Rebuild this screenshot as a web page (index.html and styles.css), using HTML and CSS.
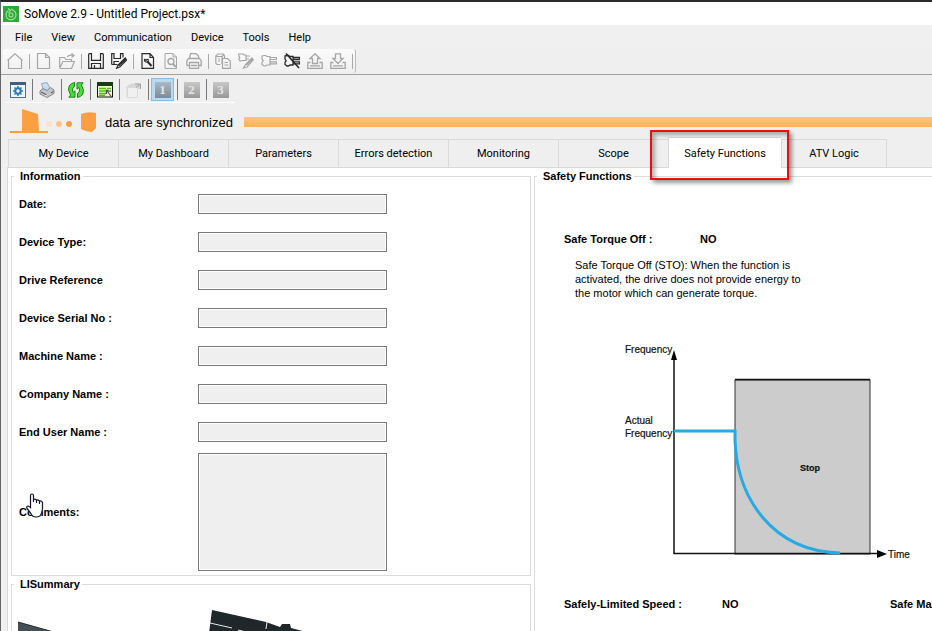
FILE: index.html
```html
<!DOCTYPE html>
<html lang="en">
<head>
    <meta charset="UTF-8">
    <meta name="viewport" content="width=device-width, initial-scale=1.0">
    <title>SoMove 2.9 - Untitled Project.psx*</title>
    <link rel="stylesheet" href="styles.css">
</head>
<body>
    <header class="titlebar">
        <svg width="16" height="16" viewBox="0 0 16 16">
            <rect width="16" height="16" fill="#2ea836"/>
            <path d="M5.5 4.5 A5 5 0 1 0 10.5 4.5 M5 2.5 L7.5 4.5 L5.5 7 M8 3 L10.5 4.5 M6 9 a2 2 0 1 0 4 0 a2 2 0 0 0 -4 0" fill="none" stroke="#a5e0a0" stroke-width="1.1"/>
        </svg>
        <h1>SoMove 2.9 - Untitled Project.psx*</h1>
    </header>

    <nav class="menubar">
        <button type="button">File</button>
        <button type="button">View</button>
        <button type="button">Communication</button>
        <button type="button">Device</button>
        <button type="button">Tools</button>
        <button type="button">Help</button>
    </nav>

    <!-- Project toolbar -->
    <div class="toolbar-row">
        <div class="toolbar main-toolbar">
            <button type="button" aria-label="Home"><svg class="off" viewBox="0 0 16 16"><path d="M0.5 7.5 L8 0.8 L15.5 7.5 M1.5 7 V15.5 H14.5 V7" stroke-width="1.2"/></svg></button>
            <span class="sep"></span>
            <button type="button" aria-label="New"><svg class="off" viewBox="0 0 16 16"><path d="M1.5 0.5 H9.5 L13.5 4.5 V15.5 H1.5 Z M9.5 0.5 V4.5 H13.5" stroke-width="1.2"/></svg></button>
            <button type="button" aria-label="Open"><svg class="off" viewBox="0 0 16 16"><path d="M0.7 15 V4.5 H5.5 L7 6.5 H12.5 V8.5 M0.7 15 L4 8.5 H15.5 L12.5 15.5 H0.7 M8 4 Q10 1.5 14.5 2.5 M12.5 0.5 L15 2.5 L12.5 4.5" stroke-width="1.2"/></svg></button>
            <span class="sep"></span>
            <button type="button" aria-label="Save"><svg viewBox="0 0 16 16"><path d="M0.7 0.7 V15.3 H15.3 V0.7 M0.7 0.7 H3.5 V7.3 H12.5 V0.7 H15.3 M3.5 15 V10.5 H12.5 V15 M6.5 12 V15" stroke-width="1.2"/></svg></button>
            <button type="button" aria-label="Save as"><svg viewBox="0 0 16 16"><path d="M0.7 11.5 V0.7 H3 V5.5 H9.5 V0.7 H12 V4.5 M0.7 11.5 H6.5 M3 11 V8.5 H8" stroke-width="1.2"/><path d="M14.2 4.8 L7 12 L5.5 15.3 L8.8 14 L15.6 7 Z M7.5 13 L14.8 6" stroke-width="1.1"/></svg></button>
            <span class="sep"></span>
            <button type="button" aria-label="Configure"><svg viewBox="0 0 16 16"><path d="M2 0.7 H10 L13.5 4.5 V15.3 H2 Z M10 1 V4.5 H13.5" stroke-width="1.2"/><path d="M7.5 8.5 L11.5 13" stroke-width="2"/><path d="M4.5 6 L6 7.5 L7.5 6 M4.5 6 Q4 9 6.5 9.3 Q9 8.5 8 6" stroke-width="1.1"/></svg></button>
            <button type="button" aria-label="Preview"><svg class="off" viewBox="0 0 16 16"><path d="M2 0.5 H10 L13.5 4 V15.5 H2 Z M10 0.5 V4 H13.5"/><circle cx="8" cy="8.5" r="3" stroke-width="1.4"/><path d="M10 11 L13 14" stroke-width="2"/></svg></button>
            <button type="button" aria-label="Print"><svg class="off" viewBox="0 0 16 16"><path d="M3.5 5.5 L4.5 0.6 H10 L12.5 3 V5.5 M0.8 12.5 V8 L2.5 5.5 H13.5 L15.2 8 V12.5 H12.5 M0.8 12.5 H3.5 M3.5 9.5 H12.5 V15.3 H3.5 Z M5 12.5 H11" stroke-width="1.3"/></svg></button>
            <span class="sep"></span>
            <button type="button" aria-label="Compare"><svg class="off" viewBox="0 0 16 16"><path d="M5.5 11.5 H2 L0.8 10 V3 L3 1 H8.5 L9.5 3 V5 M1 3.5 H7 V11 M7 3.5 L9 1.5 M3 6 H5 M3 8 H5 M7.5 5.5 H12.5 L15.3 8 V15.3 H7.5 Z M9.5 9.5 H13 M9.5 12 H13.5" stroke-width="1.2"/></svg></button>
            <button type="button" aria-label="Edit connection"><svg class="off" viewBox="0 0 16 16"><path d="M0.8 1 H5 L6 2 H8 V7.5 H4 L2 8 L0.8 6 L1.8 4.5 L0.8 3 Z M8 3 H12 M8 6 H11 M14 5 L7.5 11.5 L5.5 15 L9 14 L15.3 7 Z M8.5 12 L14.5 6" stroke-width="1.2"/></svg></button>
            <button type="button" aria-label="Connect"><svg class="off" viewBox="0 0 16 16"><path d="M1 3 L3 2.5 H4.5 L6 3.5 H9 V12 H6 L4.5 13 H3 L1 11.5 V9.5 L2.2 7.7 L1 6 Z M9 4.5 H15.5 V6.5 H9 M9 8.8 H15.5 V10.8 H9" stroke-width="1.2"/></svg></button>
            <button type="button" aria-label="Disconnect"><svg viewBox="0 0 16 16"><path d="M1 3 L3 2.5 H4.5 L6 3.5 H9 V12 H6 L4.5 13 H3 L1 11.5 V9.5 L2.2 7.7 L1 6 Z M9 4.5 H15.5 V6.5 H9 M9 8.8 H15.5 V10.8 H9" stroke-width="1.3"/><path d="M2 0.5 L15 15" stroke-width="1.6"/></svg></button>
            <button type="button" aria-label="Load from device"><svg class="off" viewBox="0 0 16 16"><path d="M8 0.8 L13 5.5 H10.5 V10.5 H5.5 V5.5 H3 Z M3.5 9.5 H0.8 V15.3 H15.2 V9.5 H12.5 M3 12.8 H13" stroke-width="1.3"/></svg></button>
            <button type="button" aria-label="Store to device"><svg class="off" viewBox="0 0 16 16"><path d="M5.5 0.8 H10.5 V5.5 H13 L8 10.5 L3 5.5 H5.5 Z M3.5 9.5 H0.8 V15.3 H15.2 V9.5 H12.5 M3 12.8 H13" stroke-width="1.3"/></svg></button>
            <span class="sep"></span>
        </div>
    </div>

    <!-- Device toolbar -->
    <div class="toolbar device-toolbar">
        <button type="button" aria-label="Settings"><svg viewBox="0 0 16 16"><rect x="0.5" y="0.5" width="15" height="15" fill="#eef5fa" stroke="#52708c"/><rect width="16" height="3" fill="#3f5f80" stroke="none"/><circle cx="8" cy="9" r="2.7" stroke="#2f7cb4" stroke-width="2"/><path d="M8 4 V6 M8 12 V14 M3 9 H5 M11 9 H13 M4.5 5.5 L6 7 M10 11 L11.5 12.5 M11.5 5.5 L10 7 M6 11 L4.5 12.5" stroke="#2f7cb4" stroke-width="1.5"/></svg></button>
        <span class="sep"></span>
        <button type="button" aria-label="Print report"><svg viewBox="0 0 16 16"><path d="M4 7 L2.5 1.5 L8 0.5 L11 6 L9 9 Z" fill="#c3def5" stroke="#93a9bd"/><path d="M1 9 L4 6.5 L8 8.5 L11.5 5.5 L15 8 V11.5 L8 15.5 L1 12 Z" fill="#c3c5c8" stroke="#84878b"/><path d="M2 10 L8 13 L14.5 9.5" stroke="#4d5054"/><path d="M6 14 L12 11" stroke="#f2f2f2"/></svg></button>
        <span class="sep"></span>
        <button type="button" aria-label="Refresh"><svg viewBox="0 0 16 16"><path d="M6.5 0.5 V4.5 Q4 5.5 4.5 9 L5 10.5 L7 8.8 V15.2 H0.8 L2.6 13 Q-0.8 8 1.2 4 Q3 1 6.5 0.5 Z M9.5 15.5 V11.5 Q12 10.5 11.5 7 L11 5.5 L9 7.2 V0.8 H15.2 L13.4 3 Q16.8 8 14.8 12 Q13 15 9.5 15.5 Z" fill="#4fdc3a" stroke="#148a14"/></svg></button>
        <span class="sep"></span>
        <button type="button" aria-label="Parameter list"><svg viewBox="0 0 16 16"><rect x="0.5" y="0.5" width="15" height="14.5" fill="#e6ffc8" stroke="#111"/><rect width="16" height="4" fill="#173d12" stroke="none"/><path d="M2 6.5 H9 M2 9 H9 M2 11.5 H9 M2 13.5 H8 M10 6.5 H14 M13 9 H14" stroke="#55b51b" stroke-width="1.4"/><path d="M9.5 8 L14.5 15 M9.5 7.5 V12 M9.5 8 L13.5 9.5" stroke="#555" stroke-width="1.2"/></svg></button>
        <span class="sep"></span>
        <button type="button" aria-label="Copy page"><svg viewBox="0 0 16 16"><path d="M0.5 5 Q3 1.5 8 1.5 H15 V7 H12 V15.5 H0.5 Z" fill="#d6d6d6" stroke="none"/><path d="M1.5 5.5 H11.5 V15.5 H1.5 Z" fill="#f0f0f0" stroke="#dadada"/><path d="M9 2 H14.5 V7 M10 5.5 L14 2.5" stroke="#a2a2a2"/></svg></button>
        <span class="sep"></span>
        <button type="button" class="page-btn selected"><span>1</span></button>
        <span class="sep"></span>
        <button type="button" class="page-btn"><span>2</span></button>
        <span class="sep"></span>
        <button type="button" class="page-btn"><span>3</span></button>
    </div>

    <div class="status">
        <svg width="90" height="28" viewBox="0 0 90 28">
            <path d="M12 1 L28 6 L29 23 H38 V25 H0 V23 H12 Z" fill="#fd9f40"/>
            <circle cx="39" cy="16" r="3" fill="#fee3cb"/>
            <circle cx="49" cy="16" r="3" fill="#fdc58d"/>
            <circle cx="59" cy="16" r="3" fill="#fd9f40"/>
            <path d="M71 6 Q78 3 86 5 V20 L82 24 Q76 24 71 21 Z" fill="#fd9f40"/>
        </svg>
        <span class="status-text">data are synchronized</span>
        <div class="status-bar"></div>
    </div>

    <nav class="tabs">
        <button type="button">My Device</button>
        <button type="button">My Dashboard</button>
        <button type="button">Parameters</button>
        <button type="button">Errors detection</button>
        <button type="button">Monitoring</button>
        <button type="button">Scope</button>
        <button type="button" class="active">Safety Functions</button>
        <button type="button" class="last">ATV Logic</button>
    </nav>

    <main class="panel">
        <div class="left">
            <fieldset class="information">
                <legend>Information</legend>
                <div class="row">
                    <label for="date">Date:</label>
                    <input type="text" id="date" readonly>
                </div>
                <div class="row">
                    <label for="device_type">Device Type:</label>
                    <input type="text" id="device_type" readonly>
                </div>
                <div class="row">
                    <label for="drive_reference">Drive Reference</label>
                    <input type="text" id="drive_reference" readonly>
                </div>
                <div class="row">
                    <label for="serial_no">Device Serial No :</label>
                    <input type="text" id="serial_no" readonly>
                </div>
                <div class="row">
                    <label for="machine_name">Machine Name :</label>
                    <input type="text" id="machine_name" readonly>
                </div>
                <div class="row">
                    <label for="company_name">Company Name :</label>
                    <input type="text" id="company_name" readonly>
                </div>
                <div class="row">
                    <label for="end_user">End User Name :</label>
                    <input type="text" id="end_user" readonly>
                </div>
                <div class="row comments">
                    <label for="comments">Comments:</label>
                    <textarea id="comments" readonly></textarea>
                    <svg class="pointer" width="18" height="25" viewBox="0 0 18 25">
                        <path d="M4.5 14.5 V2.5 Q4.5 1 6 1 Q7.5 1 7.5 2.5 V9 V6.5 Q9 5.5 10.5 7 V10 V7 Q12 6.5 13.5 8 V11 V8 Q15.5 7.5 16.5 9.5 V16 Q16 20 14 23 Q10 25 6.5 23 Q4 19 1 15.5 Q0 13.5 2 13 Q3.5 13.5 4.5 14.5 Z" fill="#fff" stroke="#14142a" stroke-width="1.2"/>
                    </svg>
                </div>
            </fieldset>

            <fieldset class="summary">
                <legend>LISummary</legend>
                <svg width="300" height="60" viewBox="0 0 300 60">
                    <path d="M0 18 L32 27 L90 44 V60 H0 Z" fill="#465054"/>
                    <path d="M0 18 L32 27 L90 44" fill="none" stroke="#23292b"/>
                    <path d="M194 6 L248 18 L262 23 L264 20 H272 L273 24 L300 31 V60 H187 Z" fill="#20272a"/>
                    <path d="M192 19 L214 24 M220 26 L240 31 M249 18 L248 25" fill="none" stroke="#e8e8e8"/>
                </svg>
            </fieldset>
        </div>

        <fieldset class="safety">
            <legend>Safety Functions</legend>
            <div class="function-head">
                <span class="name">Safe Torque Off :</span>
                <span class="value">NO</span>
            </div>
            <p>Safe Torque Off (STO): When the function is<br>activated, the drive does not provide energy to<br>the motor which can generate torque.</p>
            <svg class="chart" width="300" height="222" viewBox="0 0 300 222">
                <rect x="115" y="40" width="135" height="174" fill="#ccc" stroke="#333" stroke-width="1"/>
                <path d="M115 39.5 H250" stroke="#111" stroke-width="1.5"/>
                <path d="M54 14 V213.5 H260" fill="none" stroke="#111" stroke-width="1.5"/>
                <path d="M54 10 L57 20 H51 Z M267 214 L257 210 V218 Z" fill="#000"/>
                <path d="M54 91 H115 V100 C117 158 152 211 220 213" fill="none" stroke="#27aae1" stroke-width="3"/>
                <text x="5" y="13">Frequency</text>
                <text x="5" y="84">Actual</text>
                <text x="5" y="97">Frequency</text>
                <text x="268" y="218">Time</text>
                <text x="180" y="131" class="stop">Stop</text>
            </svg>
            <div class="function-head second">
                <span class="name">Safely-Limited Speed :</span>
                <span class="value">NO</span>
                <span class="name">Safe Maximum Speed :</span>
            </div>
        </fieldset>
    </main>
</body>
</html>
```
FILE: styles.css
```css
* {
    box-sizing: border-box;
}
body {
    margin: 0;
    height: 100vh;
    overflow: hidden;
    display: flex;
    flex-direction: column;
    background-color: #efefef;
    border-top: 2px solid #2b292a;
    border-left: 1px solid #666;
    font-family: "Liberation Sans", Arial, sans-serif;
    font-size: 11px;
    color: #000;
}
button {
    padding: 0;
    border: none;
    background: none;
    color: inherit;
    font-family: Roboto, sans-serif;
    font-size: 11px;
}
.titlebar {
    flex: none;
    display: flex;
    align-items: center;
    gap: 5px;
    height: 23px;
    padding-left: 2px;
    background-color: white;
}
h1 {
    margin: 0;
    font-family: Roboto, sans-serif;
    font-size: 12px;
    font-weight: normal;
}
.menubar {
    flex: none;
    display: flex;
    gap: 19px;
    height: 24px;
    padding-left: 14px;
    background-color: #f0f0f0;
}
.toolbar-row {
    flex: none;
    height: 26px;
    border-bottom: 1px solid #a0a0a0;
}
.toolbar {
    display: flex;
    align-items: center;
    width: max-content;
}
.toolbar button {
    display: flex;
    align-items: center;
    justify-content: center;
    width: 23px;
    height: 23px;
}
.toolbar svg {
    width: 16px;
    height: 16px;
    fill: none;
    stroke: #2a2a2a;
}
.toolbar svg.off {
    stroke: #a6a6a6;
}
.sep {
    width: 6px;
    height: 15px;
    background: linear-gradient(#aaa, #aaa) 3px 0 / 1px 100% no-repeat;
}
.main-toolbar {
    height: 24px;
    margin-left: 2px;
    background: linear-gradient(#fbfbfb, #efefef);
    border-right: 1px solid #bbb;
    border-radius: 3px;
}
.device-toolbar {
    flex: none;
    height: 28px;
    margin-left: 5px;
    padding: 2px 3px 0 0;
    border-bottom: 1px solid white;
}
.device-toolbar .sep {
    height: 21px;
    background: linear-gradient(#777, #777) 3px 0 / 1px 100% no-repeat;
}
.page-btn span {
    width: 16px;
    height: 16px;
    background: linear-gradient(#c8c8c8, #989898);
    color: #e4e4e4;
    font: bold 13px/16px "Liberation Serif", serif;
}
.toolbar .selected {
    background-color: #b9d9f2;
    border: 1px solid #84bdec;
}
.selected span {
    background: linear-gradient(#a9b9c6, #7e8a94);
}
.status {
    flex: none;
    display: flex;
    align-items: center;
    height: 34px;
    padding: 4px 0 0 9px;
}
.status-text {
    width: 144px;
    padding-left: 5px;
    font-size: 13px;
    white-space: nowrap;
}
.status-bar {
    flex: 1;
    height: 10px;
    background: linear-gradient(#ffc675, #fdb058);
}
.tabs {
    flex: none;
    display: flex;
    align-items: flex-end;
    height: 31px;
    margin-left: 6px;
    padding-left: 1px;
    box-shadow: inset 0 -1px #d9d9d9;
}
.tabs button {
    width: 110px;
    height: 29px;
    border: 1px solid #d9d9d9;
    border-right: none;
}
.tabs .active {
    position: relative;
    width: 113px;
    height: 31px;
    background-color: white;
    border-bottom: none;
}
/* highlight frame round the current tab */
.tabs .active::after {
    content: "";
    position: absolute;
    inset: -8px -8px -12px -19px;
    border: 2px solid #ee0c0c;
    box-shadow: 3px 3px 4px rgba(0, 0, 0, 0.4), inset 3px 3px 4px rgba(0, 0, 0, 0.3);
}
.tabs .last {
    width: 106px;
    border-right: 1px solid #d9d9d9;
}
.panel {
    flex: 1;
    min-height: 0;
    display: flex;
    gap: 3px;
    margin-left: 6px;
    padding: 1px 0 0 3px;
    background-color: white;
    border-left: 1px solid #d9d9d9;
    overflow: hidden;
}
.left {
    flex: none;
    display: flex;
    flex-direction: column;
    width: 520px;
}
fieldset {
    margin: 0;
    padding: 0 7px;
    border: 1px solid #dcdcdc;
}
legend {
    margin-left: -5px;
    padding: 0 2px 0 6px;
    line-height: 14px;
    font-weight: bold;
}
.information {
    flex: none;
    height: 407px;
    padding-top: 2px;
}
.row {
    position: relative;
    display: flex;
    align-items: center;
    height: 38px;
}
.row label {
    width: 179px;
    font-weight: bold;
}
.row input,
.row textarea {
    width: 189px;
    height: 20px;
    margin: 0;
    padding: 0;
    background-color: #efefef;
    border: 1px solid #7a7a7a;
    box-shadow: inset 0 0 0 1px white;
    border-radius: 0;
    resize: none;
}
.comments {
    height: 122px;
}
.row textarea {
    height: 118px;
}
.pointer {
    position: absolute;
    left: 7px;
    top: 42px;
}
.summary {
    flex: 1;
    min-height: 0;
    margin-top: 1px;
    border-bottom: none;
    overflow: hidden;
}
.summary svg {
    display: block;
    margin: 13px 0 0 -1px;
}
.safety {
    flex: 1;
    min-width: 0;
    min-height: 0;
    padding: 0 0 0 29px;
    border-right: none;
    border-bottom: none;
    overflow: hidden;
    white-space: nowrap;
}
.safety legend {
    margin-left: -27px;
}
.function-head {
    display: flex;
    margin-top: 49px;
    font-weight: bold;
    line-height: 14px;
}
.function-head span {
    flex: none;
}
.name {
    width: 136px;
}
.safety p {
    margin: 12px 0 0 11px;
    line-height: 14px;
}
.chart {
    display: block;
    margin: 40px 0 0 56px;
    font-size: 10px;
}
.chart text {
    fill: #111;
    stroke: #111;
    stroke-width: 0.2px;
}
.chart .stop {
    font-size: 9px;
    font-weight: bold;
}
.second {
    margin-top: 35px;
}
.second .name {
    width: 158px;
}
.second .value {
    width: 168px;
}
```
